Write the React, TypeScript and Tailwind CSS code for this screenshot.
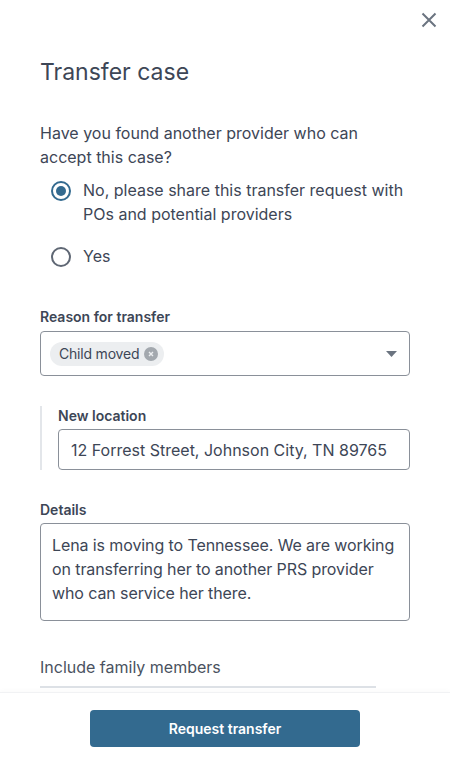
import React from "react";

const Radio = ({ checked }: { checked?: boolean }) =>
  checked ? (
    <span className="mt-[3px] flex h-[20px] w-[20px] shrink-0 items-center justify-center rounded-full border-2 border-[#336a8f]">
      <span className="h-[10px] w-[10px] rounded-full bg-[#336a8f]" />
    </span>
  ) : (
    <span className="mt-[3px] h-[20px] w-[20px] shrink-0 rounded-full border-2 border-[#5f6774]" />
  );

export default function App() {
  return (
    <div
      className="flex h-[761px] w-[450px] flex-col overflow-hidden bg-white text-[#3d4656]"
      style={{ fontFamily: "Inter, 'Noto Sans', sans-serif" }}
    >
      <div className="relative flex-1 overflow-hidden px-10">
        <button className="absolute right-[12px] top-[11px] text-[#6b7480]">
          <svg width="18" height="18" viewBox="0 0 18 18" fill="none">
            <path d="M2.5 2.5l13 13M15.5 2.5l-13 13" stroke="currentColor" strokeWidth="2" />
          </svg>
        </button>

        <h1 className="pt-[58px] text-[23px] leading-[28px]">Transfer case</h1>

        {/* Question */}
        <p className="mt-[35px] text-[16px] leading-[24px]">
          Have you found another provider who can accept this case?
        </p>
        <div className="mt-[9px] flex flex-col gap-[18px] pl-[11px]">
          <label className="flex gap-[12px] text-[16px] leading-[24px]">
            <Radio checked />
            <span>
              No, please share this transfer request with
              <br />
              POs and potential providers
            </span>
          </label>
          <label className="flex gap-[12px] text-[16px] leading-[24px]">
            <Radio />
            <span>Yes</span>
          </label>
        </div>

        {/* Reason */}
        <div className="mt-[39px] text-[14px] font-semibold leading-[20px]">Reason for transfer</div>
        <div className="mt-[4px] flex h-[45px] items-center justify-between rounded-[4px] border border-[#8a9099] pl-[9px] pr-[12px]">
          <span className="flex h-[24px] items-center gap-[5px] rounded-full bg-[#eceef0] pl-[9px] pr-[6px] text-[14px] tracking-[-0.2px]">
            Child moved
            <span className="flex h-[14px] w-[14px] items-center justify-center rounded-full bg-[#a3a8ae]">
              <svg width="8" height="8" viewBox="0 0 8 8">
                <path d="M2 2l4 4M6 2l-4 4" stroke="#eceef0" strokeWidth="1.4" />
              </svg>
            </span>
          </span>
          <svg width="11" height="6" viewBox="0 0 11 6">
            <path d="M0 0h11L5.5 6z" fill="#6b7480" />
          </svg>
        </div>

        {/* New location */}
        <div className="mt-[30px] border-l-2 border-[#e3e6ea] pl-[16px]">
          <div className="text-[14px] font-semibold leading-[20px]">New location</div>
          <div className="mt-[3px] flex h-[41px] items-center rounded-[4px] border border-[#8a9099] px-[12px] text-[16px]">
            12 Forrest Street, Johnson City, TN 89765
          </div>
        </div>

        {/* Details */}
        <div className="mt-[30px] text-[14px] font-semibold leading-[20px]">Details</div>
        <div className="mt-[3px] h-[98px] whitespace-nowrap rounded-[4px] border border-[#8a9099] px-[11px] pt-[9px] text-[16px] leading-[24px] tracking-[-0.1px]">
          Lena is moving to Tennessee. We are working
          <br />
          on transferring her to another PRS provider
          <br />
          who can service her there.
        </div>

        {/* Family */}
        <div className="mt-[34px] text-[16px] leading-[24px] text-[#4a5260]">Include family members</div>
        <div className="mt-[7px] h-[2px] w-[336px] bg-[#dde1e6]" />
      </div>

      <div className="flex h-[69px] shrink-0 justify-center border-t border-[#f1f2f4] pt-[17px] shadow-[0_-2px_4px_rgba(0,0,0,0.02)]">
        <button className="h-[37px] w-[270px] rounded-[4px] bg-[#336a8f] text-[14px] font-semibold text-white">
          Request transfer
        </button>
      </div>
    </div>
  );
}
